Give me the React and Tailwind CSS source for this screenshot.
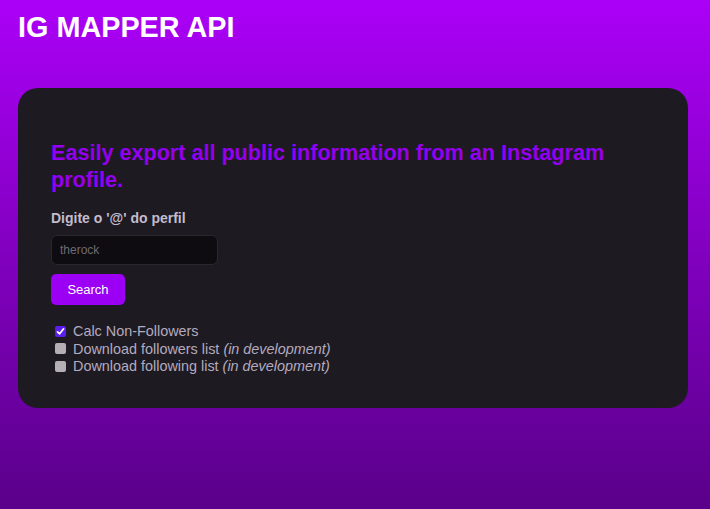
import React from "react";

export default function App() {
  const items = [
    { label: "Calc Non-Followers", dev: false, checked: true },
    { label: "Download followers list", dev: true, checked: false },
    { label: "Download following list", dev: true, checked: false },
  ];
  return (
    <div className="min-h-screen bg-gradient-to-b from-[#ab00f7] to-[#5a008a] pl-[18px] pr-[22px] pb-[40px] font-['Liberation_Sans',Arial,sans-serif]">
      <h1 className="pt-[11px] text-[28.8px] font-bold leading-[32px] text-white">IG MAPPER API</h1>
      <div className="mt-[45px] rounded-[20px] bg-[#1e1a22] px-[33px] pt-[51px] pb-[32px]">
        <h2 className="text-[21.6px] font-bold leading-[27px] text-[#9400ef]">
          Easily export all public information from an Instagram profile.
        </h2>
        <label className="mt-[17px] block text-[14px] font-bold leading-[16px] text-[#c3bccc]">
          Digite o '@' do perfil
        </label>
        <input
          type="text"
          placeholder="therock"
          className="mt-[9px] block h-[30px] w-[167px] rounded-[6px] border border-[#2a272e] bg-[#0e0c10] px-[8px] text-[12px] text-[#cfc8d6] outline-none placeholder:text-[#6e6a74]"
        />
        <button className="mt-[9px] flex h-[31px] w-[74px] items-center justify-center rounded-[5px] bg-[#9b00f5] text-[13px] text-white">
          Search
        </button>
        <div className="mt-[18px] flex flex-col">
          {items.map((it) => (
            <label key={it.label} className="flex h-[17.5px] items-center text-[14.4px] leading-[17.5px] text-[#b3abbf]">
              {it.checked ? (
                <span className="ml-[4px] mr-[6px] -mt-[1px] flex h-[11px] w-[11px] items-center justify-center rounded-[2px] bg-[#5b1ef0]">
                  <svg width="9" height="9" viewBox="0 0 9 9" fill="none">
                    <path d="M1.5 4.8 L3.6 6.8 L7.6 1.8" stroke="white" strokeWidth="1.7" strokeLinecap="round" strokeLinejoin="round" />
                  </svg>
                </span>
              ) : (
                <span className="ml-[4px] mr-[6px] -mt-[1px] block h-[11px] w-[11px] rounded-[2px] bg-[#b3afb5]" />
              )}
              <span className="ml-[1px]">
                {it.label}
                {it.dev && (
                  <>
                    {" "}
                    <em className="italic">(in development)</em>
                  </>
                )}
              </span>
            </label>
          ))}
        </div>
      </div>
    </div>
  );
}
